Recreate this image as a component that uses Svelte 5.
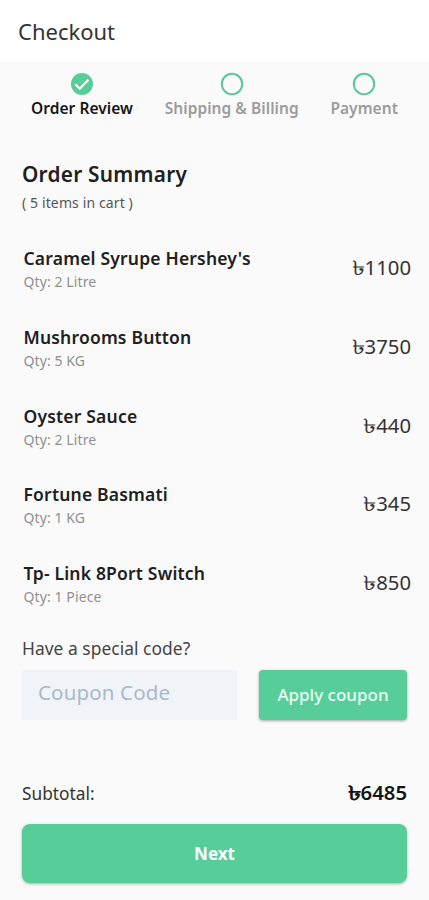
<script>
  const steps = [
    { label: 'Order Review', done: true },
    { label: 'Shipping & Billing', done: false },
    { label: 'Payment', done: false },
  ];
  const items = [
    { name: "Caramel Syrupe Hershey's", qty: '2 Litre', price: 1100 },
    { name: 'Mushrooms Button', qty: '5 KG', price: 3750 },
    { name: 'Oyster Sauce', qty: '2 Litre', price: 440 },
    { name: 'Fortune Basmati', qty: '1 KG', price: 345 },
    { name: 'Tp- Link 8Port Switch', qty: '1 Piece', price: 850 },
  ];
  const subtotal = items.reduce((sum, item) => sum + item.price, 0);
</script>

<div class="screen">
  <header><h1>Checkout</h1></header>

  <nav class="steps">
    {#each steps as step}
      <div class="step" class:done={step.done}>
        <svg width="24" height="24" viewBox="0 0 24 24">
          {#if step.done}
            <circle cx="12" cy="12" r="11" fill="#57ce99" />
            <path d="M5.3 12.2l4.5 4.5 8.6-8.9" fill="none" stroke="#fff" stroke-width="2.2" />
          {:else}
            <circle cx="12" cy="12" r="10.2" fill="none" stroke="#57c99a" stroke-width="2" />
          {/if}
        </svg>
        <span>{step.label}</span>
      </div>
    {/each}
  </nav>

  <main>
    <h2>Order Summary</h2>
    <p class="count">( 5 items in cart )</p>

    <ul>
      {#each items as item}
        <li>
          <div>
            <h3>{item.name}</h3>
            <p class="qty">Qty: {item.qty}</p>
          </div>
          <span class="price"><span class="taka">৳</span>{item.price}</span>
        </li>
      {/each}
    </ul>

    <p class="ask">Have a special code?</p>
    <div class="coupon">
      <input placeholder="Coupon Code" aria-label="Coupon Code" />
      <button class="apply">Apply coupon</button>
    </div>

    <div class="subtotal">
      <span>Subtotal:</span>
      <strong><span class="taka">৳</span>{subtotal}</strong>
    </div>
    <button class="next">Next</button>
  </main>
</div>

<style>
  :global(body) {
    background: #fafafa;
  }
  .screen {
    width: 429px;
    height: 900px;
    overflow: hidden;
    box-sizing: border-box;
    background: #fafafa;
    color: #202020;
    font-family: 'Noto Sans', 'Open Sans', sans-serif;
  }
  h1, h2, h3, p, ul, li {
    margin: 0;
    padding: 0;
    list-style: none;
    white-space: nowrap;
  }
  header {
    height: 62px;
    padding-left: 18px;
    background: #fff;
    display: flex;
    align-items: center;
  }
  h1 {
    font-size: 22px;
    font-weight: 400;
    line-height: 62px;
    color: #333;
  }
  .steps {
    display: flex;
    justify-content: space-between;
    padding: 10px 31px 0 31px;
    height: 70px;
  }
  .step {
    display: flex;
    flex-direction: column;
    align-items: center;
    font-size: 15.5px;
    font-weight: 600;
    line-height: 24px;
    letter-spacing: 0.05px;
    color: #9c9c9c;
    white-space: nowrap;
  }
  .step.done {
    color: #151515;
  }
  svg {
    display: block;
  }
  main {
    padding: 18px 22px 0;
  }
  h2 {
    font-size: 20.8px;
    font-weight: 600;
    line-height: 29px;
    letter-spacing: 0.25px;
  }
  .count {
    font-size: 14px;
    line-height: 28px;
    letter-spacing: 0.12px;
    color: #555;
  }
  ul {
    padding: 29px 0 0 1.5px;
  }
  li {
    display: flex;
    justify-content: space-between;
    height: 78.8px;
    margin-right: -4px;
  }
  li:last-child {
    height: 74.4px;
  }
  h3 {
    font-size: 17.5px;
    font-weight: 600;
    line-height: 24px;
    letter-spacing: 0.19px;
  }
  .qty {
    font-size: 14px;
    line-height: 23px;
    letter-spacing: 0.1px;
    color: #909090;
  }
  .price {
    font-size: 20.3px;
    line-height: 43px;
    color: #333;
  }
  .taka {
    display: inline-block;
    line-height: 1;
    transform: scaleX(1.35);
    transform-origin: right center;
  }
  .ask {
    font-size: 17.4px;
    line-height: 25px;
    letter-spacing: 0.04px;
    color: #444;
  }
  .coupon {
    display: flex;
    justify-content: space-between;
    margin-top: 9px;
  }
  input, button {
    box-sizing: border-box;
    border: 0;
    font-family: inherit;
  }
  input {
    width: 215px;
    height: 50px;
    padding: 0 16px 5px;
    background: #f0f4f8;
    font-size: 20.5px;
    letter-spacing: 0.15px;
  }
  input::placeholder {
    color: #a9b9c9;
    opacity: 1;
  }
  button {
    background: #57ce99;
    color: #fff;
    padding: 0;
    white-space: nowrap;
  }
  .apply {
    width: 148px;
    height: 50px;
    border-radius: 4px;
    font-size: 17px;
    font-weight: 500;
    color: #eafff5;
    box-shadow: 0 1px 3px rgba(0, 0, 0, 0.35);
  }
  .subtotal {
    display: flex;
    justify-content: space-between;
    height: 30px;
    margin-top: 59px;
    line-height: 30px;
    font-size: 17.3px;
    color: #333;
  }
  .subtotal strong {
    font-size: 20.3px;
    font-weight: 600;
    line-height: 27px;
    color: #151515;
  }
  .next {
    width: 385px;
    height: 59px;
    margin-top: 15px;
    border-radius: 8px;
    font-size: 17px;
    font-weight: 700;
    box-shadow: 0 1px 3px rgba(0, 0, 0, 0.3);
  }
</style>
